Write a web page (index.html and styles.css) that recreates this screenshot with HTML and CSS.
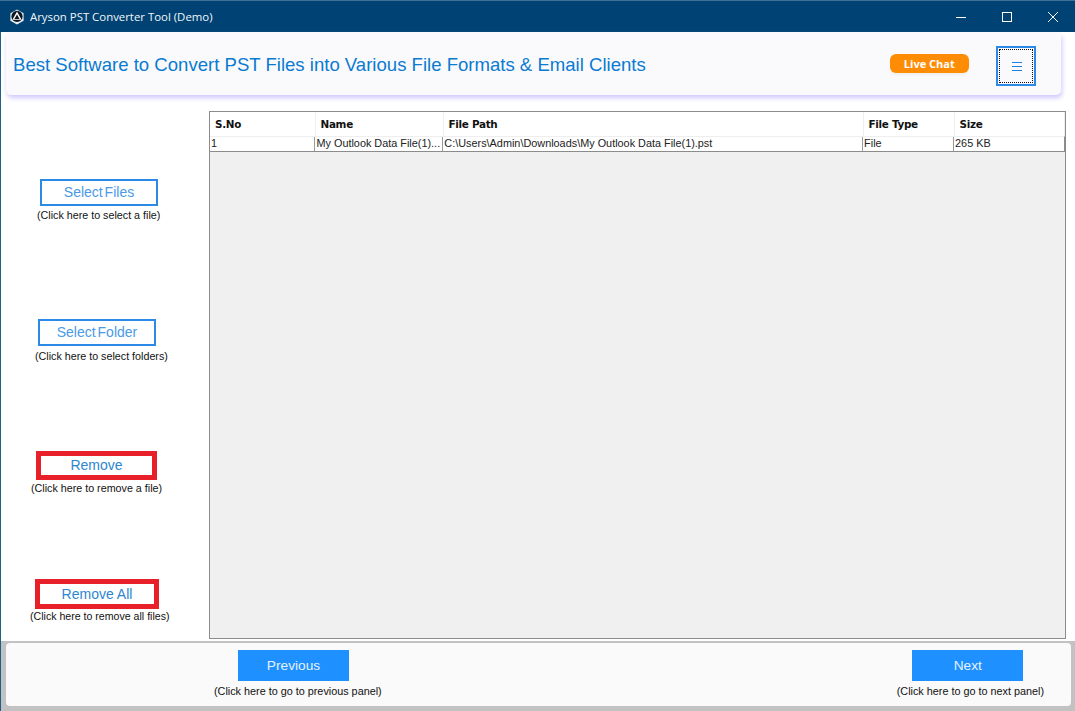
FILE: index.html
```html
<!DOCTYPE html>
<html lang="en">
<head>
<meta charset="utf-8">
<title>Aryson PST Converter Tool (Demo)</title>
<link rel="stylesheet" href="styles.css">
</head>
<body>
<div class="window">
  <div class="titlebar">
    <svg class="app-icon" width="16" height="16" viewBox="0 0 16 16"><path d="M8 .5 14.6 4.2V11.8L8 15.5 1.4 11.8V4.2Z" fill="#e8eef3"/><circle cx="8" cy="7.4" r="5.6" fill="#0c1622"/><path d="M8 2.6 12.6 10.8H3.4Z" fill="#fff"/><path d="M8 5.4 10.6 10H5.4Z" fill="#0c1622"/></svg>
    <span class="title">Aryson PST Converter Tool (Demo)</span>
    <div class="controls">
      <svg width="12" height="12" viewBox="0 0 12 12"><path d="M1 6.5H11" stroke="#fff" stroke-width="1"/></svg>
      <svg width="12" height="12" viewBox="0 0 12 12"><rect x="1.5" y="1.5" width="9" height="9" fill="none" stroke="#fff" stroke-width="1"/></svg>
      <svg width="12" height="12" viewBox="0 0 12 12"><path d="M1 1 11 11M11 1 1 11" stroke="#fff" stroke-width="1"/></svg>
    </div>
  </div>
  <div class="main">
    <header class="banner">
      <h1>Best Software to Convert PST Files into Various File Formats &amp; Email Clients</h1>
      <span class="chat">Live Chat</span>
      <div class="menu"><div class="menu-inner"><svg width="10" height="10" viewBox="0 0 10 10"><path d="M0 .5H10M0 4.5H10M0 8.5H10" stroke="#1f80e0" stroke-width="1"/></svg></div></div>
    </header>
    <div class="content">
      <aside class="side">
        <div class="group g1"><div class="btn blue">Select Files</div><div class="cap">(Click here to select a file)</div></div>
        <div class="group g2"><div class="btn blue">Select Folder</div><div class="cap">(Click here to select folders)</div></div>
        <div class="group g3"><div class="btn red">Remove</div><div class="cap">(Click here to remove a file)</div></div>
        <div class="group g4"><div class="btn red wide">Remove All</div><div class="cap">(Click here to remove all files)</div></div>
      </aside>
      <div class="table">
        <div class="thead">
          <div class="c c1">S.No</div><div class="c c2">Name</div><div class="c c3">File Path</div><div class="c c4">File Type</div><div class="c c5">Size</div>
        </div>
        <div class="trow">
          <div class="c c1">1</div><div class="c c2">My Outlook Data File(1)...</div><div class="c c3">C:\Users\Admin\Downloads\My Outlook Data File(1).pst</div><div class="c c4">File</div><div class="c c5">265 KB</div>
        </div>
      </div>
    </div>
    <footer class="footer">
      <div class="panel">
        <div class="nav prev"><div class="navbtn">Previous</div><div class="cap">(Click here to go to previous panel)</div></div>
        <div class="nav next"><div class="navbtn">Next</div><div class="cap">(Click here to go to next panel)</div></div>
      </div>
    </footer>
  </div>
</div>
</body>
</html>
```
FILE: styles.css
```css
* { box-sizing: border-box; }
html, body { margin: 0; padding: 0; }
body { width: 1075px; height: 711px; overflow: hidden; font-family: "Liberation Sans", Arial, sans-serif; background: #fff; }
.window { width: 1075px; height: 711px; display: flex; flex-direction: column; border-left: 1px solid #1f5f8f; }
.titlebar { height: 32px; flex: none; background: #004274; border-top: 1px solid #3d7196; color: #fff; display: flex; align-items: center; padding-left: 9px; margin-left: -1px; }
.app-icon { flex: none; }
.title { font-family: "Open Sans", sans-serif; font-size: 11.4px; margin-left: 5px; color: #f2f6f9; }
.controls { margin-left: auto; display: flex; gap: 34px; padding-right: 16px; align-items: center; }
.controls svg { display: block; }
.main { flex: 1; display: flex; flex-direction: column; min-height: 0; }
.banner { height: 62px; flex: none; margin: 1px 14px 0 5px; background: #fafafc; border-radius: 0 0 5px 5px; box-shadow: 1px 3px 5px #cfc9fb; display: flex; align-items: center; padding-left: 7px; }
.banner h1 { margin: 2px 0 0; font-size: 18.57px; font-weight: 400; color: #0a7bd0; white-space: nowrap; }
.chat { margin: 0 0 1px 244px; width: 79px; height: 19px; border-radius: 6px; background: #ff8c05; color: #fff; font: 700 11px/19px "Open Sans", sans-serif; text-align: center; box-shadow: 0 2px 3px #eee; }
.menu { margin: 4px 0 0 27px; width: 40px; height: 40px; border: 2px solid #2b8ae6; padding: 1px; background: #fafafc; }
.menu-inner { width: 100%; height: 100%; border: 1px dotted #111; display: flex; align-items: center; justify-content: center; }
.menu-inner svg { display: block; margin: 2px 0 0 2px; }
.content { flex: 1; min-height: 0; display: flex; padding-top: 15px; }
.side { width: 208px; flex: none; padding-top: 69px; }
.group { display: flex; flex-direction: column; width: 200px; }
.btn { height: 27px; width: 118px; border: 2px solid #2b8ae6; color: #4a9ae6; font-size: 14px; line-height: 23px; text-align: center; background: #fff; word-spacing: -2px; }
.btn.red { border: 5px solid #e8202a; color: #2d86cf; height: 29px; width: 121px; line-height: 19px; word-spacing: 0; }
.btn.wide { width: 124px; height: 30px; line-height: 20px; }
.cap { font-size: 10.72px; line-height: 13px; color: #111; white-space: nowrap; margin-top: 3px; }
.g1 { margin-left: 39px; }
.g1 .cap { margin-left: -3px; }
.g2 { margin-left: 37px; margin-top: 97px; }
.g2 .cap { margin-left: -3px; margin-top: 4px; }
.g3 { margin-left: 35px; margin-top: 88px; }
.g3 .cap { margin-left: -5px; margin-top: 2px; }
.g4 { margin-left: 34px; margin-top: 84px; }
.g4 .cap { margin-left: -5px; margin-top: 1px; font-size: 10.6px; }
.table { width: 857px; height: 528px; flex: none; border: 1px solid #8c8c8c; background: #f0f0f0; margin-top: 1px; }
.thead, .trow { display: flex; background: #fff; }
.thead { height: 24px; font: 700 10.4px/25px "DejaVu Sans", sans-serif; letter-spacing: -.3px; color: #111; }
.thead .c { padding-left: 5px; border-right: 1px solid #eee; }
.trow { height: 16px; font: 400 10.87px/13px "Liberation Sans", sans-serif; color: #222; border-top: 1px solid #eee; border-bottom: 1px solid #8c8c8c; border-right: 1px solid #8c8c8c; }
.trow .c { padding-left: 1px; border-right: 1px solid #9a9a9a; white-space: nowrap; overflow: hidden; }
.trow .c5 { border-right: 0; }
.c1 { width: 105.5px; }
.c2 { width: 128px; }
.c3 { width: 420px; }
.c4 { width: 91px; }
.c5 { width: 110px; }
.footer { height: 70px; flex: none; background: #c2c2c2; padding: 2px 4px 5px 5px; }
.panel { height: 63px; background: #fafafa; border-radius: 4px; display: flex; padding-top: 7px; }
.nav { display: flex; flex-direction: column; align-items: flex-start; }
.navbtn { width: 111px; height: 31px; background: #1e90ff; color: #e6f3ff; font-size: 13.7px; line-height: 31px; text-align: center; }
.prev { margin-left: 208px; }
.prev .navbtn { margin-left: 24px; }
.next { margin-left: auto; margin-right: 27px; }
.next .navbtn { margin-left: 15.5px; }
.nav .cap { margin-top: 4px; font-size: 10.82px; }
```
